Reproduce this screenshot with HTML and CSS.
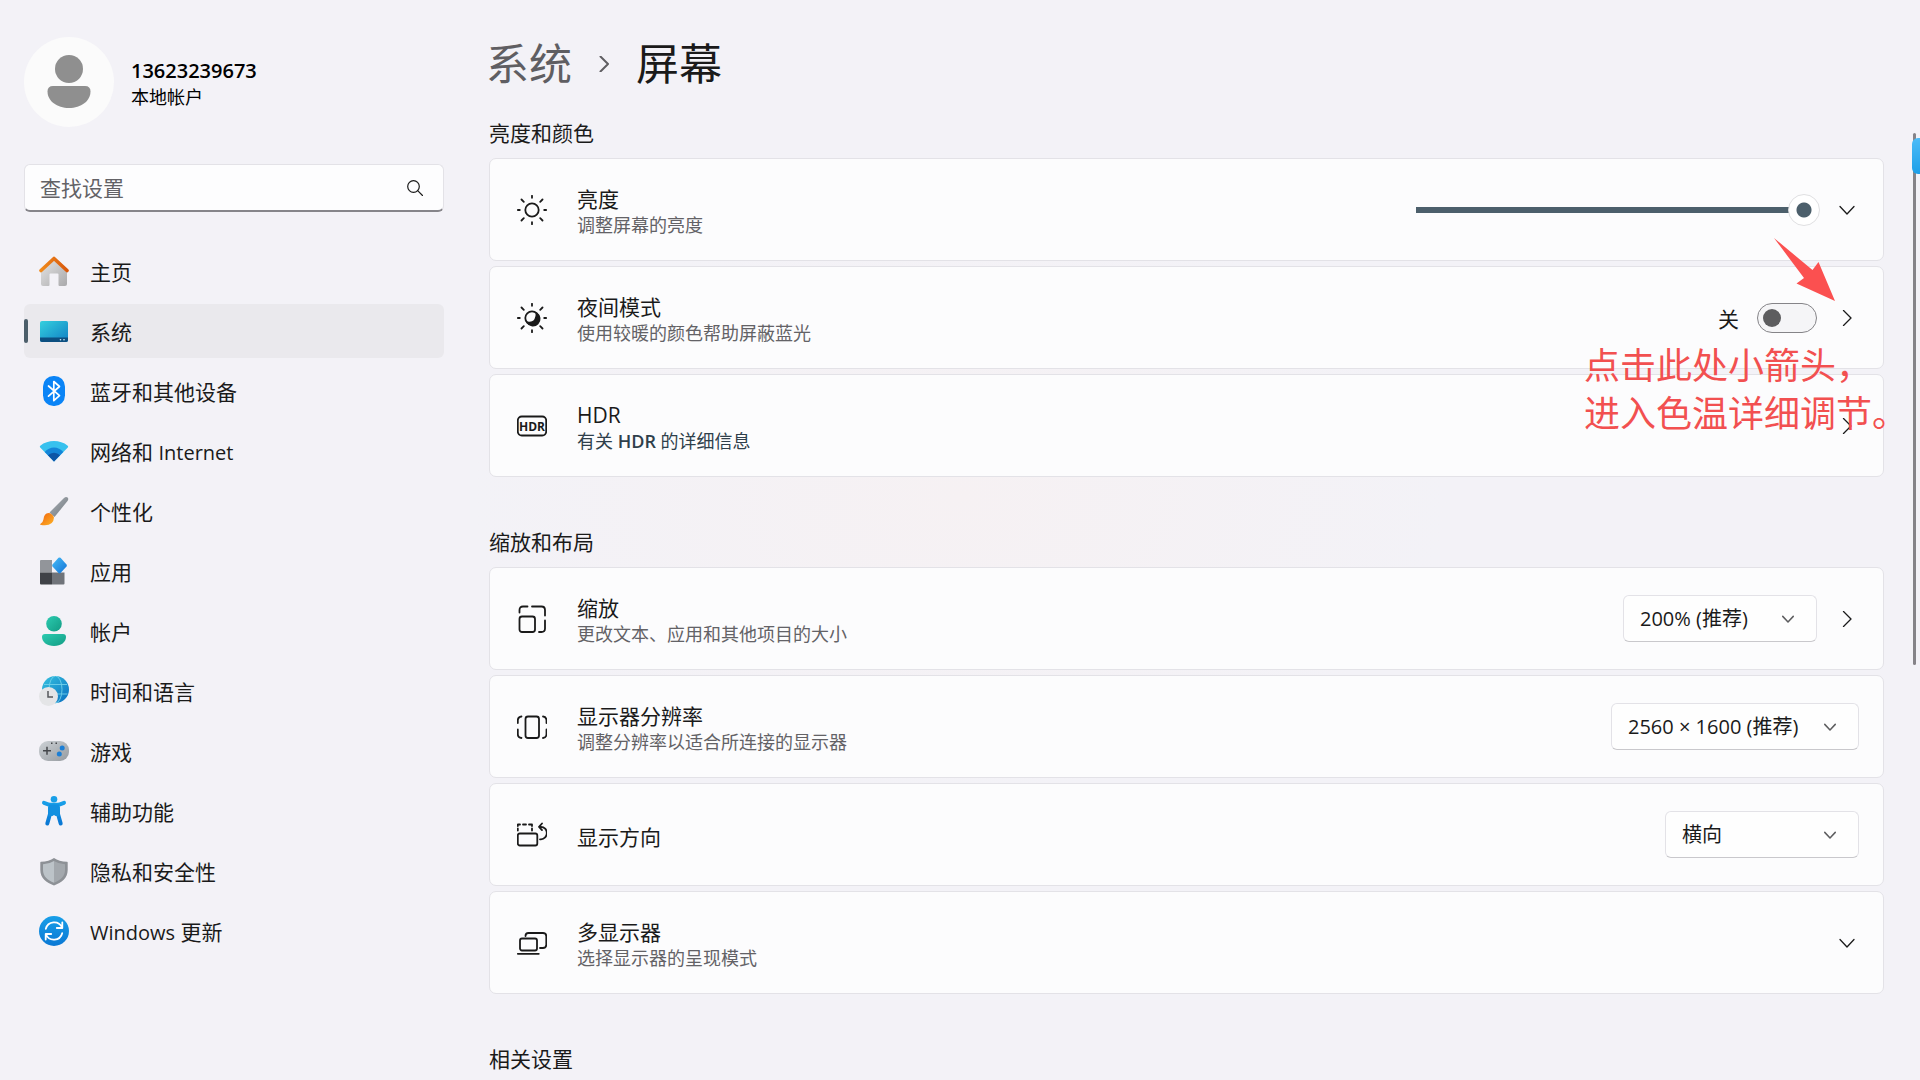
FILE: index.html
```html
<!DOCTYPE html>
<html lang="zh-CN">
<head>
    <meta charset="UTF-8" />
    <meta name="viewport" content="width=device-width, initial-scale=1.0" />
    <title>设置 - 屏幕</title>
    <link rel="stylesheet" href="styles.css">
</head>
<body>
    <!-- shared shapes -->
    <svg class="defs" aria-hidden="true">
        <defs>
            <symbol id="down" viewBox="0 0 16 16"><path d="M1 4.500l7 7.500 7-7.500" /></symbol>
            <symbol id="right" viewBox="0 0 16 16"><path d="M4.500 0.500l7.500 7.500-7.500 7.500" /></symbol>
            <linearGradient id="roof" x1="0" x2="1"><stop offset="0" stop-color="#f08a1c" /><stop offset="1" stop-color="#d9590c" /></linearGradient>
            <linearGradient id="wall" x1="0" y1="0" x2="1" y2="1"><stop offset="0" stop-color="#e6e6e6" /><stop offset="1" stop-color="#a9a9ab" /></linearGradient>
            <linearGradient id="screen" x1="0" y1="0" x2="1" y2="1"><stop offset="0" stop-color="#35d0de" /><stop offset="1" stop-color="#0f7fc4" /></linearGradient>
            <linearGradient id="handle" x1="0" y1="0" x2="1" y2="1"><stop offset="0" stop-color="#a9b0b6" /><stop offset="1" stop-color="#737a80" /></linearGradient>
            <linearGradient id="bristle" x1="0" y1="0" x2="1" y2="1"><stop offset="0" stop-color="#f0620c" /><stop offset="1" stop-color="#fdb528" /></linearGradient>
            <linearGradient id="diamond" x1="0" y1="0" x2="1" y2="1"><stop offset="0" stop-color="#46bdf7" /><stop offset="1" stop-color="#1372d6" /></linearGradient>
            <linearGradient id="green" x1="0" y1="0" x2="1" y2="1"><stop offset="0" stop-color="#2ccbb0" /><stop offset="1" stop-color="#129c84" /></linearGradient>
            <linearGradient id="globe" x1="0" y1="0" x2="1" y2="1"><stop offset="0" stop-color="#35c3e0" /><stop offset="1" stop-color="#0a6fc0" /></linearGradient>
            <linearGradient id="pad" x1="0" y1="0" x2="1" y2="1"><stop offset="0" stop-color="#cdd2d6" /><stop offset="1" stop-color="#959a9f" /></linearGradient>
            <linearGradient id="blue" x1="0" y1="0" x2="0" y2="1"><stop offset="0" stop-color="#189fe8" /><stop offset="1" stop-color="#0a78d4" /></linearGradient>
        </defs>
    </svg>

    <div class="window">
        <aside class="sidebar">
            <div class="account">
                <svg class="avatar" viewBox="0 0 90 90" aria-hidden="true">
                    <circle cx="45" cy="45" r="45" fill="#fbfbfb" />
                    <circle cx="45" cy="32" r="14" fill="#8f8f8f" />
                    <path d="M29 49h32q5.500 0 5.500 5.500C66.500 64 57 71 45 71S23.500 64 23.500 54.500Q23.500 49 29 49z" fill="#8f8f8f" />
                </svg>
                <div class="account-text">
                    <div class="account-name">13623239673</div>
                    <div class="account-type">本地帐户</div>
                </div>
            </div>

            <div class="search">
                <input type="text" placeholder="查找设置" aria-label="查找设置">
                <button type="button" aria-label="搜索">
                    <svg class="line" viewBox="0 0 16 16"><circle cx="6.500" cy="6.500" r="5.800" /><path d="M10.700 10.700L15.500 15.500" /></svg>
                </button>
            </div>

            <nav class="nav">
                <a href="#">
                    <svg viewBox="0 0 30 30">
                        <path d="M2 14L15 2.500 28 14v14q0 2-2 2h-5.500q-1 0-1-1V18.500q0-1-1-1h-7q-1 0-1 1V29q0 1-1 1H4q-2 0-2-2z" fill="url(#wall)" />
                        <path d="M2 14.500L15 2.500l13 12" fill="none" stroke="url(#roof)" stroke-width="3.600" stroke-linecap="round" stroke-linejoin="round" />
                    </svg>
                    <span>主页</span>
                </a>
                <a href="#" class="active">
                    <svg viewBox="0 0 30 30">
                        <rect x="1" y="5" width="28" height="21" rx="2" fill="url(#screen)" />
                        <path d="M1 21.500h28V24q0 2-2 2H3q-2 0-2-2z" fill="#0c4f80" />
                        <circle cx="21.500" cy="23.700" r="0.800" fill="#d5f1fb" /><circle cx="25" cy="23.700" r="0.800" fill="#d5f1fb" />
                    </svg>
                    <span>系统</span>
                </a>
                <a href="#">
                    <svg viewBox="0 0 30 30">
                        <rect x="4" y="0" width="22" height="30" rx="10.500" fill="#0a84f6" />
                        <path d="M9.500 10l11 9.700-5.700 5V5.500l5.700 5-11 9.700" fill="none" stroke="#fff" stroke-width="1.700" stroke-linejoin="round" stroke-linecap="round" />
                    </svg>
                    <span>蓝牙和其他设备</span>
                </a>
                <a href="#">
                    <svg viewBox="0 0 30 30">
                        <path d="M15 25.500L1.200 11.500q-.9-1 .1-1.800C9 3.500 21 3.500 28.700 9.700q1 .8.100 1.800z" fill="#37c1ee" />
                        <path d="M15 25.500L5.700 16q4-4.500 9.300-4.500t9.300 4.500z" fill="#1485d8" />
                        <path d="M15 25.500l-6-6.200q2.500-2.500 6-2.500t6 2.500z" fill="#0d55a6" />
                    </svg>
                    <span>网络和 <span class="latin">Internet</span></span>
                </a>
                <a href="#">
                    <svg viewBox="0 0 30 30">
                        <path d="M10.500 16.500L25 2q2-1.800 3.600-.5 1.400 1.500-.1 3.600L15.500 21z" fill="url(#handle)" />
                        <path d="M9.500 17q3.500 0 5.500 4.500-.5 8-9.500 7.800-4 0-4.500-1 3-1.300 3.500-5Q5 17.500 9.500 17z" fill="url(#bristle)" />
                    </svg>
                    <span>个性化</span>
                </a>
                <a href="#">
                    <svg viewBox="0 0 30 30">
                        <path d="M2 4h11v12.500H1V5q0-1 1-1z" fill="#92959a" />
                        <path d="M1 16.500h12v12H2q-1 0-1-1z" fill="#3f4247" />
                        <path d="M13 16.500h12.500v11q0 1-1 1H13z" fill="#70747a" />
                        <path d="M19.500 1.800q1-.8 2 0l6 6.700q.8 1 0 2l-6 6.500q-1 .8-2 0l-6-6.500q-.8-1 0-2z" fill="url(#diamond)" />
                    </svg>
                    <span>应用</span>
                </a>
                <a href="#">
                    <svg viewBox="0 0 30 30">
                        <circle cx="15" cy="7.800" r="7.800" fill="url(#green)" />
                        <path d="M6 18h18q3 0 3 3c0 5-5 9-12 9S3 26 3 21q0-3 3-3z" fill="url(#green)" />
                    </svg>
                    <span>帐户</span>
                </a>
                <a href="#">
                    <svg viewBox="0 0 30 30">
                        <circle cx="16.500" cy="13.500" r="13.500" fill="url(#globe)" />
                        <g fill="none" stroke="#6fd0ea" stroke-width="0.900"><ellipse cx="16.500" cy="13.500" rx="6.500" ry="13.500" /><path d="M5 8.500h23M5 18h23.500" /></g>
                        <circle cx="9.500" cy="20.500" r="9.500" fill="#e4e5e7" />
                        <path d="M9 15v6h5" fill="none" stroke="#55585c" stroke-width="1.500" />
                    </svg>
                    <span>时间和语言</span>
                </a>
                <a href="#">
                    <svg viewBox="0 0 30 30">
                        <rect x="0" y="5" width="30" height="20" rx="9" fill="url(#pad)" />
                        <path d="M4 14.800h8M8 10.800v8" stroke="#44474b" stroke-width="1.500" />
                        <path d="M12 7.200h1.500M16.500 7.200H18" stroke="#44474b" stroke-width="1.500" />
                        <circle cx="23.200" cy="12" r="2.500" fill="#1c7fd6" /><circle cx="20.300" cy="18" r="2.500" fill="#1c7fd6" />
                    </svg>
                    <span>游戏</span>
                </a>
                <a href="#">
                    <svg viewBox="0 0 30 30">
                        <circle cx="15" cy="3.300" r="3.300" fill="#189fe8" />
                        <path d="M5 6.800l5.500 2H19.500L25 6.800M11 10v8l-2.700 9.500M19 10v8l2.700 9.500" fill="none" stroke="url(#blue)" stroke-width="4" stroke-linecap="round" stroke-linejoin="round" />
                        <path d="M10 8.500h10V20h-3.500L15 19l-1.500 1H10z" fill="#1290e0" />
                    </svg>
                    <span>辅助功能</span>
                </a>
                <a href="#">
                    <svg viewBox="0 0 30 30">
                        <path d="M15 2q5 3.500 13 3.700.7 0 .7.800V14c0 8-6 12.500-13.700 15.500C7.300 26.500 1.300 22 1.300 14V6.500q0-.8.7-.8Q10 5.500 15 2z" fill="#8d9196" />
                        <path d="M15 5v21.700C8.500 24 4 20.500 4 14V8.300Q10.500 8 15 5z" fill="#bcc3c8" />
                        <path d="M15 5v21.700C21.500 24 26 20.500 26 14V8.300Q19.500 8 15 5z" fill="#a3a8ad" />
                    </svg>
                    <span>隐私和安全性</span>
                </a>
                <a href="#">
                    <svg viewBox="0 0 30 30">
                        <circle cx="15" cy="15" r="15" fill="url(#blue)" />
                        <path d="M6.800 12.800A8.600 8.600 0 0 1 23 11.500M23.200 17.200A8.600 8.600 0 0 1 7 18.500M23.300 6.500v5.500h-5.500M6.700 23.500V18h5.500" fill="none" stroke="#fff" stroke-width="1.800" stroke-linecap="round" stroke-linejoin="round" />
                    </svg>
                    <span><span class="latin">Windows</span> 更新</span>
                </a>
            </nav>
        </aside>

        <main class="content">
            <h1 class="breadcrumb">
                <a href="#">系统</a>
                <svg class="line" viewBox="0 0 16 16"><use href="#right" /></svg>
                <span>屏幕</span>
            </h1>

            <section>
                <h2>亮度和颜色</h2>
                <div class="card">
                    <svg class="icon line" viewBox="0 0 30 30"><circle cx="15" cy="15" r="6.700" /><path d="M15 .800v2M15 27.200v2M.800 15h2M27.200 15h2M4.500 4.500l2.300 2.300M23.200 23.200l2.300 2.300M25.500 4.500l-2.300 2.300M6.800 23.200l-2.300 2.300" /></svg>
                    <div class="text">
                        <label class="title" for="brightness">亮度</label>
                        <p>调整屏幕的亮度</p>
                    </div>
                    <input class="slider" type="range" id="brightness" min="0" max="100" value="100">
                    <button class="more" type="button" aria-label="展开亮度"><svg class="line" viewBox="0 0 16 16"><use href="#down" /></svg></button>
                </div>
                <div class="card">
                    <svg class="icon line" viewBox="0 0 30 30"><circle cx="15" cy="15" r="6.700" /><path d="M19.500 10.200a6.700 6.700 0 1 1-9.200 9.300q6 .8 8-3 1.500-3 1.200-6.300z" fill="#1a1a1a" /><path d="M15 .800v2M15 27.200v2M.800 15h2M27.200 15h2M4.500 4.500l2.300 2.300M23.200 23.200l2.300 2.300M25.500 4.500l-2.300 2.300M6.800 23.200l-2.300 2.300" /></svg>
                    <div class="text">
                        <div class="title">夜间模式</div>
                        <p>使用较暖的颜色帮助屏蔽蓝光</p>
                    </div>
                    <label class="state" for="night">关</label>
                    <input class="toggle" type="checkbox" id="night">
                    <button class="more" type="button" aria-label="夜间模式设置"><svg class="line" viewBox="0 0 16 16"><use href="#right" /></svg></button>
                    <svg class="pointer" viewBox="0 0 61 63" aria-hidden="true"><path d="M0 0L38.500 32 44.500 24 61 63 22.500 45.500 30 40z" /></svg>
                    <div class="note">点击此处小箭头，<br>进入色温详细调节。</div>
                </div>
                <div class="card">
                    <svg class="icon line" viewBox="0 0 30 30"><rect x="0.800" y="5.500" width="28.400" height="19" rx="4" /><text x="15" y="19.500" text-anchor="middle">HDR</text></svg>
                    <div class="text">
                        <div class="title">HDR</div>
                        <a class="link" href="#">有关 <b>HDR</b> 的详细信息</a>
                    </div>
                    <button class="more" type="button" aria-label="HDR 设置"><svg class="line" viewBox="0 0 16 16"><use href="#right" /></svg></button>
                </div>
            </section>

            <section>
                <h2>缩放和布局</h2>
                <div class="card">
                    <svg class="icon line" viewBox="0 0 30 30"><rect x="2.500" y="12.500" width="15.500" height="15.500" rx="2.500" /><path d="M2.500 8.500V6q0-3.500 3.500-3.500h4.500M15 2.500h9.500Q28 2.500 28 6v5.500M28 16.500v8q0 3.500-3.500 3.500H22" /></svg>
                    <div class="text">
                        <label class="title" for="scale">缩放</label>
                        <p>更改文本、应用和其他项目的大小</p>
                    </div>
                    <div class="select">
                        <select id="scale"><option>200% (推荐)</option></select>
                        <svg class="line" viewBox="0 0 16 16"><use href="#down" /></svg>
                    </div>
                    <button class="more" type="button" aria-label="自定义缩放"><svg class="line" viewBox="0 0 16 16"><use href="#right" /></svg></button>
                </div>
                <div class="card">
                    <svg class="icon line" viewBox="0 0 30 30"><rect x="8.500" y="4.500" width="13.500" height="21.500" rx="2.500" /><path d="M4.500 4.500Q.8 5 .8 8.500V11M.8 17.500V22q0 3.500 3.700 4M26 4.500q3.500.5 3.500 4V11M29.500 17.500V22q0 3.500-3.500 4" /></svg>
                    <div class="text">
                        <label class="title" for="resolution">显示器分辨率</label>
                        <p>调整分辨率以适合所连接的显示器</p>
                    </div>
                    <div class="select wide">
                        <select id="resolution"><option>2560 × 1600 (推荐)</option></select>
                        <svg class="line" viewBox="0 0 16 16"><use href="#down" /></svg>
                    </div>
                </div>
                <div class="card">
                    <svg class="icon line" viewBox="0 0 30 30"><rect x="0.800" y="13.500" width="19.500" height="12" rx="2" /><path d="M.8 10.500V8.500M.8 6V4.500H3M6 4.500h3M12 4.500h3V6M15 8.500v2" /><path d="M22.500 6.800h1.500a5.800 6.200 0 0 1 0 12.500h-1M25 3.500l-3 3.300 3 3.300" /></svg>
                    <div class="text">
                        <label class="title" for="orientation">显示方向</label>
                    </div>
                    <div class="select">
                        <select id="orientation"><option>横向</option></select>
                        <svg class="line" viewBox="0 0 16 16"><use href="#down" /></svg>
                    </div>
                </div>
                <div class="card">
                    <svg class="icon line" viewBox="0 0 30 30"><rect x="3" y="10.500" width="17" height="12" rx="2" /><path d="M8.500 8q0-3 3-3h14.500q3.300 0 3.300 3.300v8.400q0 3.300-3.300 3.300h-3M.8 25.800h21" /></svg>
                    <div class="text">
                        <div class="title">多显示器</div>
                        <p>选择显示器的呈现模式</p>
                    </div>
                    <button class="more" type="button" aria-label="展开多显示器"><svg class="line" viewBox="0 0 16 16"><use href="#down" /></svg></button>
                </div>
            </section>

            <section>
                <h2>相关设置</h2>
            </section>
        </main>
    </div>

    <div class="scrollbar"></div>
    <div class="side-tab"></div>
</body>
</html>
```
FILE: styles.css
```css
* { box-sizing: border-box; }
body { margin: 0; min-height: 100vh; font-family: "Open Sans", "Noto Sans CJK SC", sans-serif; font-size: 21px; color: #1a1a1a; background: radial-gradient(ellipse at 50% 46%, #f6f1f3 0, #f3f2f7 36%) #f3f2f7; }
h1, h2, p { margin: 0; font-weight: 400; }
a { color: inherit; text-decoration: none; }
button { padding: 0; border: none; background: none; cursor: pointer; }
input, select { font: inherit; color: inherit; }
svg { display: block; flex: none; }
.defs { position: absolute; width: 0; height: 0; }
.line { fill: none; stroke: #1a1a1a; stroke-width: 1.8; stroke-linecap: round; stroke-linejoin: round; }
.latin { font-size: 20px; }

.window { display: grid; grid-template-columns: 420px 1fr; gap: 45px; padding: 0 36px 0 24px; }

/* sidebar */
.sidebar { padding-top: 37px; }
.account { display: flex; align-items: center; gap: 17px; color: #000; }
.avatar { width: 90px; height: 90px; }
.account-text { padding-top: 4px; }
.account-name { font-size: 20px; font-weight: 600; line-height: 26px; }
.account-type { font-size: 18px; line-height: 26px; }
.search { display: flex; align-items: center; height: 48px; margin-top: 37px; padding: 0 20px 0 15px; background: #fdfdfe; border: 1px solid #e3e2e7; border-bottom: 2px solid #86858a; border-radius: 6px; }
.search input { flex: 1; min-width: 0; padding: 0; border: none; outline: none; background: none; }
.search input::placeholder { color: #636266; }
.search svg { width: 16px; height: 16px; stroke-width: 1.2; }
.nav { display: flex; flex-direction: column; gap: 6px; margin-top: 32px; }
.nav a { display: flex; align-items: center; gap: 21px; position: relative; height: 54px; padding-left: 15px; border-radius: 6px; }
.nav svg { width: 30px; height: 30px; }
.nav .active { background: #eae9ed; }
.nav .active::before { content: ""; position: absolute; left: 0; top: 15px; width: 4px; height: 24px; border-radius: 2px; background: #4c5f6b; }

/* page content */
.content { padding-top: 36px; }
.breadcrumb { display: flex; align-items: center; height: 56px; margin: 0 0 27px -3px; font-size: 43px; }
.breadcrumb a, .breadcrumb span { padding-bottom: 6px; }
.breadcrumb a { color: #5f5e62; }
.breadcrumb svg { width: 16px; height: 16px; margin: 0 24px; stroke: #5f5e62; stroke-width: 2; }
section { display: flex; flex-direction: column; gap: 5px; }
section + section { margin-top: 51px; }
h2 { margin-bottom: 6px; font-size: 21px; line-height: 28px; }
.card { display: flex; align-items: center; gap: 18px; position: relative; height: 103px; padding: 0 24px 0 27px; background: #fcfcfd; border: 1px solid #e3e2e7; border-radius: 7px; }
.icon { width: 30px; height: 30px; margin-right: 12px; }
.icon text { font: 700 12px "Open Sans", sans-serif; fill: #1a1a1a; stroke: none; }
.text { flex: 1; padding-top: 4px; }
.title { display: block; line-height: 26px; }
.card p, .link { display: block; font-size: 18px; line-height: 26px; color: #636266; }
.link { color: #2f3f4b; }
.link b { font-weight: 600; line-height: 1; }
.more { display: grid; place-items: center; width: 24px; height: 36px; }
.more svg { width: 16px; height: 16px; stroke-width: 1.3; }

.slider { appearance: none; width: 404px; height: 32px; margin: 0 -3px 0 0; background: linear-gradient(#4c5f6b, #4c5f6b) 0 50% / 380px 6px no-repeat; }
.slider::-webkit-slider-thumb { appearance: none; width: 32px; height: 32px; border: 1px solid #e0e0e2; border-radius: 50%; background: radial-gradient(circle, #4c5f6b 7px, #fff 8px); }
.toggle { appearance: none; width: 60px; height: 30px; margin: 0; padding: 5px; border: 1px solid #858488; border-radius: 15px; background: #f5f5f7; }
.toggle::before { content: ""; display: block; width: 18px; height: 18px; border-radius: 50%; background: #5d5d5f; }

.select { display: grid; align-items: center; width: 194px; }
.select.wide { width: 248px; }
.select select, .select svg { grid-area: 1 / 1; }
.select select { appearance: none; width: 100%; height: 47px; padding: 0 16px; font-size: 20px; background: #fefefe; border: 1px solid #e3e2e7; border-bottom-color: #c9c8cc; border-radius: 6px; }
.select svg { justify-self: end; width: 12px; height: 12px; margin-right: 23px; pointer-events: none; stroke: #5d5d5f; stroke-width: 2; }

/* tutorial marks on top of the cards */
.pointer { position: absolute; top: -29px; right: 48px; z-index: 2; width: 61px; height: 63px; fill: #fb5050; }
.note { position: absolute; top: 75px; right: -25px; z-index: 2; font-size: 36px; line-height: 48px; color: #f25050; white-space: nowrap; pointer-events: none; }

.scrollbar { position: fixed; top: 133px; right: 4px; width: 3px; height: 49.3%; border-radius: 2px; background: #858388; }
.side-tab { position: fixed; top: 138px; right: 0; width: 8px; height: 36px; border-radius: 6px 0 0 6px; background: linear-gradient(#4cbcf8, #1d9fe8); }
```
